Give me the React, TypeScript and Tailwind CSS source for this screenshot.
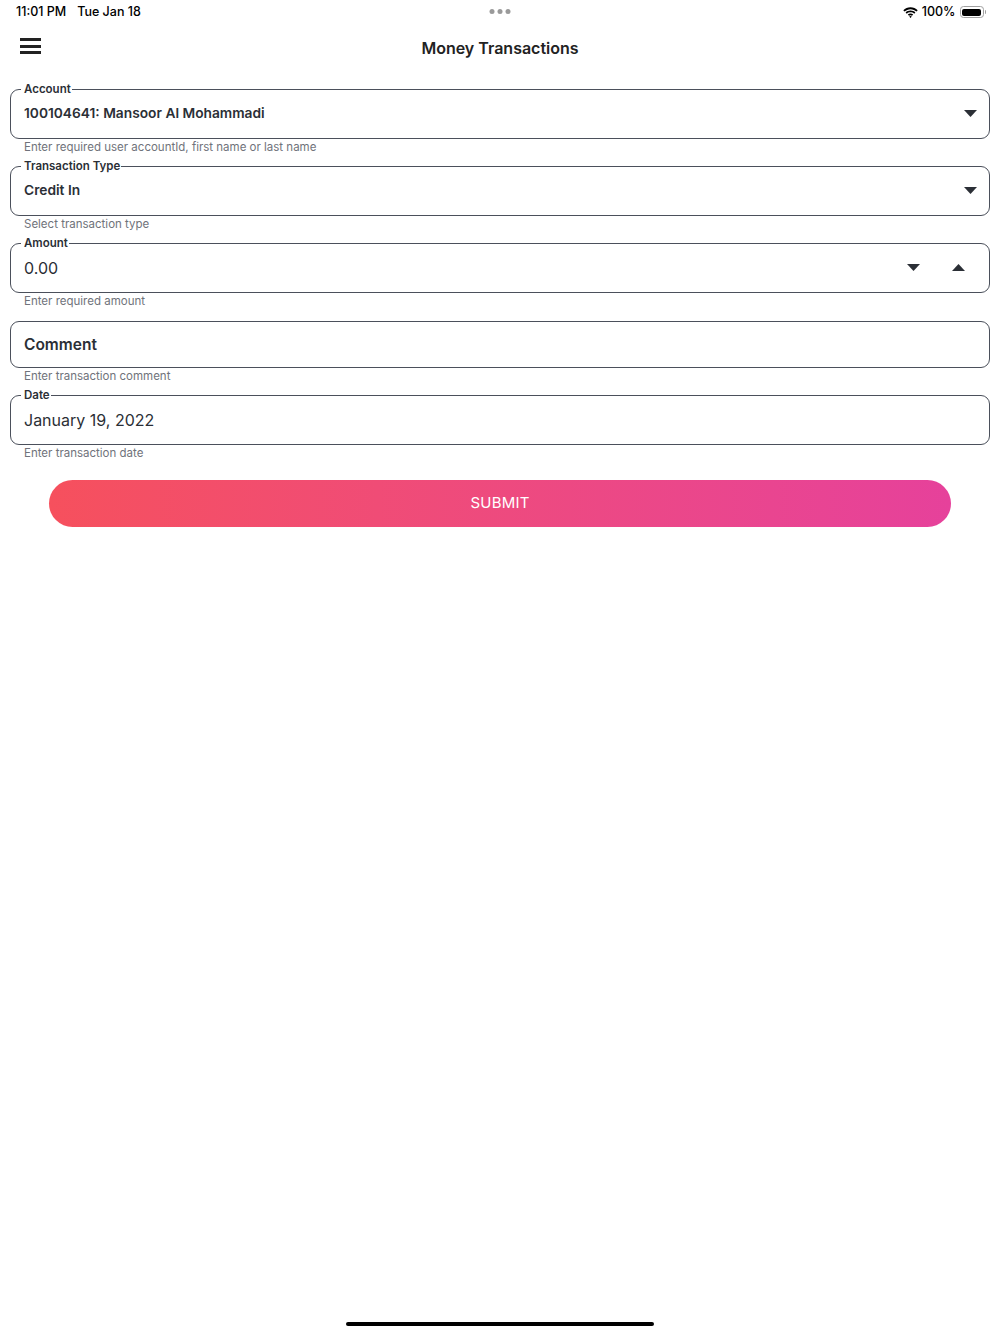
import React from 'react';

const Caret = ({ up = false }: { up?: boolean }) => (
  <svg width="13" height="7" viewBox="0 0 13 7" className="block">
    {up ? <path d="M0 7 L6.5 0 L13 7 Z" fill="#2b2f36" /> : <path d="M0 0 L13 0 L6.5 7 Z" fill="#2b2f36" />}
  </svg>
);

interface FieldProps {
  label: string;
  helper: string;
  children: React.ReactNode;
  className?: string;
}

const Field: React.FC<FieldProps> = ({ label, helper, children, className = '' }) => (
  <div className={`flex flex-col ${className}`}>
    <fieldset className="border border-[#4b505b] rounded-[9px] px-[13px] min-w-0">
      <legend className="ml-[-3px] pl-[3px] pr-[1px] text-[11.5px] leading-[14px] font-semibold text-[#2b2f36]">{label}</legend>
      <div className="flex items-center h-[35px] mb-[7px]">{children}</div>
    </fieldset>
    <p className="ml-[14px] mt-[1px] text-[11.5px] leading-[14px] text-[#70737b]">{helper}</p>
  </div>
);

export default function App() {
  return (
    <div className="min-h-[1334px] w-full bg-white flex flex-col font-['Inter',sans-serif] text-[#2b2f36]">
      {/* status bar */}
      <div className="h-[24px] flex items-center justify-between pl-[16px] pr-[14px] relative">
        <div className="flex items-center gap-[11px] text-[12.5px] font-medium text-black">
          <span>11:01 PM</span>
          <span>Tue Jan 18</span>
        </div>
        <div className="absolute left-1/2 -translate-x-1/2 top-[9px] flex gap-[3px]">
          <span className="w-[5px] h-[5px] rounded-full bg-[#9a9a9a]" />
          <span className="w-[5px] h-[5px] rounded-full bg-[#9a9a9a]" />
          <span className="w-[5px] h-[5px] rounded-full bg-[#9a9a9a]" />
        </div>
        <div className="flex items-center gap-[4px] text-[12.5px] font-medium text-black">
          <svg width="15" height="11" viewBox="0 0 15 11">
            <path d="M7.5 2.2c2.3 0 4.4.9 6 2.4l1.2-1.3C12.8 1.4 10.3.3 7.5.3S2.2 1.4.3 3.3l1.2 1.3C3.1 3.1 5.2 2.2 7.5 2.2z" fill="#000" />
            <path d="M7.5 5.3c1.4 0 2.7.5 3.7 1.4l1.2-1.3C11.1 4.2 9.4 3.5 7.5 3.5S3.9 4.2 2.6 5.4l1.2 1.3c1-.9 2.3-1.4 3.7-1.4z" fill="#000" />
            <path d="M7.5 8.3c.6 0 1.1.2 1.5.5l1.2-1.3c-.7-.6-1.7-1-2.7-1s-2 .4-2.7 1L6 8.8c.4-.3.9-.5 1.5-.5zM7.5 11l1.3-1.4c-.4-.3-.8-.5-1.3-.5s-.9.2-1.3.5z" fill="#000" />
          </svg>
          <span>100%</span>
          <div className="flex items-center">
            <div className="w-[24px] h-[12px] rounded-[3.5px] border border-[#a0a0a0] p-[1.5px]">
              <div className="w-full h-full rounded-[2px] bg-black" />
            </div>
            <div className="w-[1.5px] h-[4px] rounded-r-[1px] bg-[#a0a0a0] ml-[1px]" />
          </div>
        </div>
      </div>

      {/* header */}
      <div className="h-[48px] flex items-center relative">
        <div className="ml-[20px] flex flex-col gap-[3.5px] mt-[-4px]">
          <span className="block w-[21px] h-[3px] bg-[#222]" />
          <span className="block w-[21px] h-[3px] bg-[#222]" />
          <span className="block w-[21px] h-[3px] bg-[#222]" />
        </div>
        <h1 className="absolute left-0 right-0 text-center text-[16px] font-semibold text-[#222] pointer-events-none">
          Money Transactions
        </h1>
      </div>

      {/* form */}
      <div className="px-[10px] pt-[10px] flex flex-col">
        <Field label="Account" helper="Enter required user accountId, first name or last name">
          <span className="flex-1 text-[13.75px] font-semibold">100104641: Mansoor Al Mohammadi</span>
          <span className="mr-[-1px]"><Caret /></span>
        </Field>

        <Field label="Transaction Type" helper="Select transaction type" className="mt-[5px]">
          <span className="flex-1 text-[13.75px] font-semibold">Credit In</span>
          <span className="mr-[-1px]"><Caret /></span>
        </Field>

        <Field label="Amount" helper="Enter required amount" className="mt-[5px]">
          <span className="flex-1 text-[16px]">0.00</span>
          <span className="mr-[32px]"><Caret /></span>
          <span className="mr-[11px]"><Caret up /></span>
        </Field>

        <div className="flex flex-col mt-[13px]">
          <div className="h-[47px] border border-[#4b505b] rounded-[9px] px-[13px] flex items-center">
            <span className="text-[15.5px] font-semibold">Comment</span>
          </div>
          <p className="ml-[14px] mt-[1px] text-[11.5px] leading-[14px] text-[#70737b]">Enter transaction comment</p>
        </div>

        <Field label="Date" helper="Enter transaction date" className="mt-[5px]">
          <span className="flex-1 text-[16px]">January 19, 2022</span>
        </Field>

        <button className="mt-[20px] mx-[39px] h-[47px] rounded-full bg-gradient-to-r from-[#f6505d] to-[#e6419b] text-white text-[15px] tracking-[0.2px]">
          SUBMIT
        </button>
      </div>

      <div className="flex-1" />
      <div className="flex justify-center mb-[8px]">
        <div className="w-[308px] h-[4px] rounded-full bg-black" />
      </div>
    </div>
  );
}
